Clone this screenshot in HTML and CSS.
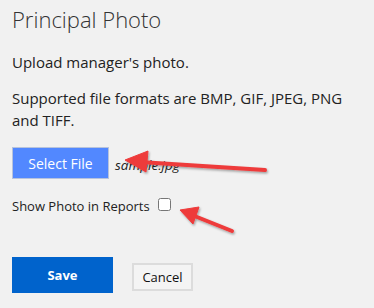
FILE: index.html
```html
<!DOCTYPE html>
<html lang="en">
<head>
    <meta charset="UTF-8">
    <title>Principal Photo</title>
    <link rel="stylesheet" href="styles.css">
</head>
<body>
    <div class="panel">
        <h1 class="title">Principal Photo</h1>
        <p class="text">Upload manager's photo.</p>
        <p class="text">Supported file formats are BMP, GIF, JPEG, PNG and TIFF.</p>
        <div class="file-row">
            <button type="button" class="select-btn">Select File</button>
            <span class="file-name">sample.jpg</span>
        </div>
        <label class="check-row">
            <span>Show Photo in Reports</span>
            <input type="checkbox" class="check">
        </label>
        <div class="actions">
            <button type="button" class="save-btn">Save</button>
            <button type="button" class="cancel-btn">Cancel</button>
        </div>
        <svg class="arrows" width="374" height="308" viewBox="0 0 374 308">
            <defs>
                <filter id="shadow" x="-20%" y="-50%" width="140%" height="200%">
                    <feDropShadow dx="1" dy="1.5" stdDeviation="1" flood-color="#000" flood-opacity="0.35"/>
                </filter>
            </defs>
            <g filter="url(#shadow)" fill="#ee3b3b" stroke="#ee3b3b">
                <line x1="265" y1="170" x2="140" y2="162" stroke-width="4" stroke-linecap="round"/>
                <polygon points="125,160 148,151 146,172" stroke-width="1" stroke-linejoin="round"/>
                <line x1="232" y1="231" x2="192" y2="215" stroke-width="4" stroke-linecap="round"/>
                <polygon points="180,210 199,207 193,224" stroke-width="1" stroke-linejoin="round"/>
            </g>
        </svg>
    </div>
</body>
</html>
```

FILE: styles.css
```css
body,html{
    margin:0;
    padding:0;
    background-color:#f1f1f1;
    font-family:'Open Sans',sans-serif;
    color:#222;
}
.panel{
    position:relative;
    width:374px;
    height:308px;
    padding:0 12px;
    box-sizing:border-box;
    overflow:hidden;
}
.title{
    margin:0;
    padding-top:5px;
    font-size:22px;
    font-weight:300;
    line-height:28px;
    color:#333;
}
.text{
    margin:18px 0 0;
    font-size:15px;
    line-height:22px;
    width:345px;
}
.text + .text{
    margin-top:14px;
}
.file-row{
    display:flex;
    align-items:center;
    margin-top:16px;
}
.select-btn{
    width:97px;
    height:32px;
    background-color:#5288ff;
    border:1px solid #b7c3dc;
    color:#fff;
    font-family:'Open Sans',sans-serif;
    font-size:14px;
    padding:0;
}
.file-name{
    margin-left:6px;
    margin-top:4px;
    font-size:13.5px;
    font-style:italic;
    color:#222;
}
.check-row{
    display:flex;
    align-items:center;
    margin-top:18px;
    font-size:13px;
}
.check{
    width:13px;
    height:13px;
    margin:0 0 3px 8px;
}
.actions{
    display:flex;
    align-items:flex-start;
    margin-top:42px;
}
.save-btn{
    width:101px;
    height:36px;
    background-color:#0063cc;
    border:none;
    color:#fff;
    font-family:'Open Sans',sans-serif;
    font-weight:700;
    font-size:13px;
    padding:0;
}
.cancel-btn{
    width:61px;
    height:28px;
    margin:6px 0 0 19px;
    background-color:#f4f4f4;
    border:2px solid #dcdcdc;
    color:#111;
    font-family:'Open Sans',sans-serif;
    font-size:13px;
    padding:0;
}
.arrows{
    position:absolute;
    left:0;
    top:0;
    pointer-events:none;
}
```
